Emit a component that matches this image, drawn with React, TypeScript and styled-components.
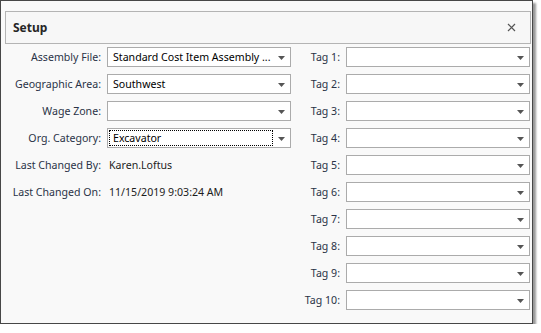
import React from 'react';
import styled, { createGlobalStyle } from 'styled-components';

const GlobalStyle = createGlobalStyle`
  body {
    margin: 0;
    background: #ffffff;
    font-family: "Noto Sans", "Liberation Sans", Arial, sans-serif;
  }
`;

const Window = styled.div`
  width: 533px;
  box-sizing: border-box;
  border: 1px solid #474747;
  background: #f9f9f9;
  box-shadow: 3px 3px 2px rgba(0, 0, 0, 0.4);
  padding: 10px 1px 13px 4px;
`;

const Header = styled.div`
  height: 33px;
  box-sizing: border-box;
  border: 1px solid #b4b4b4;
  background: #f7f7f7;
  display: flex;
  align-items: center;
  justify-content: space-between;
  padding: 0 14px 0 7px;
`;

const Title = styled.span`
  font-size: 12px;
  font-weight: 700;
  color: #262626;
`;

const CloseButton = styled.button`
  border: none;
  background: none;
  padding: 0;
  width: 9px;
  height: 9px;
  display: flex;
  cursor: pointer;
`;

const Body = styled.div`
  display: flex;
  gap: 6px;
  margin-top: 3px;
  align-items: flex-start;
`;

const FieldGrid = styled.div<{ $labelWidth: number }>`
  display: grid;
  grid-template-columns: ${(p) => p.$labelWidth}px 184px;
  grid-auto-rows: 20px;
  column-gap: 6px;
  row-gap: 7px;
`;

const Label = styled.label`
  font-size: 10.6px;
  color: #2a3347;
  text-align: right;
  white-space: nowrap;
  line-height: 20px;
`;

const Value = styled.span`
  font-size: 10.6px;
  color: #1d1d1d;
  line-height: 20px;
  padding-left: 2px;
  white-space: nowrap;
`;

const Combo = styled.div`
  box-sizing: border-box;
  height: 20px;
  border: 1px solid #ababab;
  background: #ffffff;
  display: flex;
  align-items: stretch;
`;

const ComboText = styled.span<{ $focused?: boolean }>`
  flex: 1;
  font-size: 10.6px;
  color: #000000;
  line-height: 16px;
  padding: 0 4px;
  margin: 1px 0 1px 1px;
  white-space: nowrap;
  overflow: hidden;
  outline: ${(p) => (p.$focused ? '1px dotted #000' : 'none')};
  outline-offset: -1px;
`;

const ArrowButton = styled.span`
  width: 17px;
  display: flex;
  align-items: center;
  justify-content: center;
  padding-top: 1px;
`;

const Arrow = () => (
  <svg width="7" height="4" viewBox="0 0 7 4">
    <path d="M0 0H7L3.5 4Z" fill="#555" />
  </svg>
);

const ComboBox: React.FC<{ value?: string; focused?: boolean }> = ({ value, focused }) => (
  <Combo>
    <ComboText $focused={focused}>{value}</ComboText>
    <ArrowButton>
      <Arrow />
    </ArrowButton>
  </Combo>
);

const tags = Array.from({ length: 10 }, (_, i) => `Tag ${i + 1}:`);

const App: React.FC = () => {
  return (
    <>
      <GlobalStyle />
      <Window>
        <Header>
          <Title>Setup</Title>
          <CloseButton aria-label="Close">
            <svg width="9" height="9" viewBox="0 0 9 9">
              <path d="M1 1L8 8M8 1L1 8" stroke="#555" strokeWidth="1.2" />
            </svg>
          </CloseButton>
        </Header>
        <Body>
          <FieldGrid $labelWidth={96}>
            <Label>Assembly File:</Label>
            <ComboBox value="Standard Cost Item Assembly ..." />
            <Label>Geographic Area:</Label>
            <ComboBox value="Southwest" />
            <Label>Wage Zone:</Label>
            <ComboBox />
            <Label>Org. Category:</Label>
            <ComboBox value="Excavator" focused />
            <Label>Last Changed By:</Label>
            <Value>Karen.Loftus</Value>
            <Label>Last Changed On:</Label>
            <Value>11/15/2019 9:03:24 AM</Value>
          </FieldGrid>
          <FieldGrid $labelWidth={43}>
            {tags.map((t) => (
              <React.Fragment key={t}>
                <Label>{t}</Label>
                <ComboBox />
              </React.Fragment>
            ))}
          </FieldGrid>
        </Body>
      </Window>
    </>
  );
};

export default App;
